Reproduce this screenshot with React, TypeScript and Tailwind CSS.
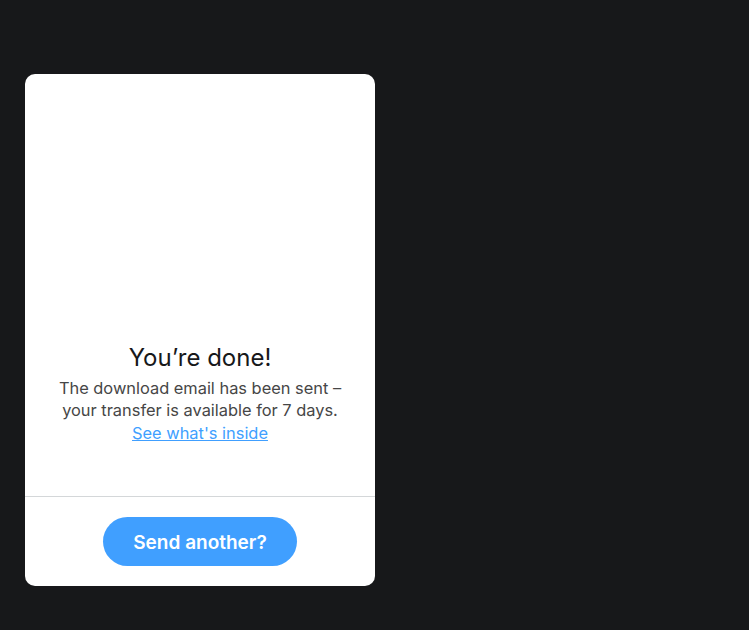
export default function App() {
  return (
    <div
      className="min-h-screen bg-[#17181a] pt-[74px] pl-[25px]"
      style={{ fontFamily: "Inter, 'Liberation Sans', sans-serif" }}
    >
      <div className="flex h-[512px] w-[350px] flex-col overflow-hidden rounded-[10px] bg-white">
        {/* Message */}
        <div className="flex flex-1 flex-col items-center justify-end px-6 pb-[52px] text-center">
          <h2 className="mb-[4px] text-[24px] leading-[30px] font-normal text-[#17181a]">
            You’re done!
          </h2>
          <p className="text-[16.4px] leading-[22.5px] text-[#464646]">
            The download email has been sent –
            <br />
            your transfer is available for 7 days.
            <br />
            <a href="#" className="text-[#409fff] underline">
              See what's inside
            </a>
          </p>
        </div>

        {/* Footer */}
        <div className="flex h-[90px] items-center justify-center border-t border-[#d4d7d9]">
          <button className="h-[49px] w-[194px] rounded-full bg-[#409fff] pt-[3px] text-[19px] font-semibold text-white">
            Send another?
          </button>
        </div>
      </div>
    </div>
  );
}
